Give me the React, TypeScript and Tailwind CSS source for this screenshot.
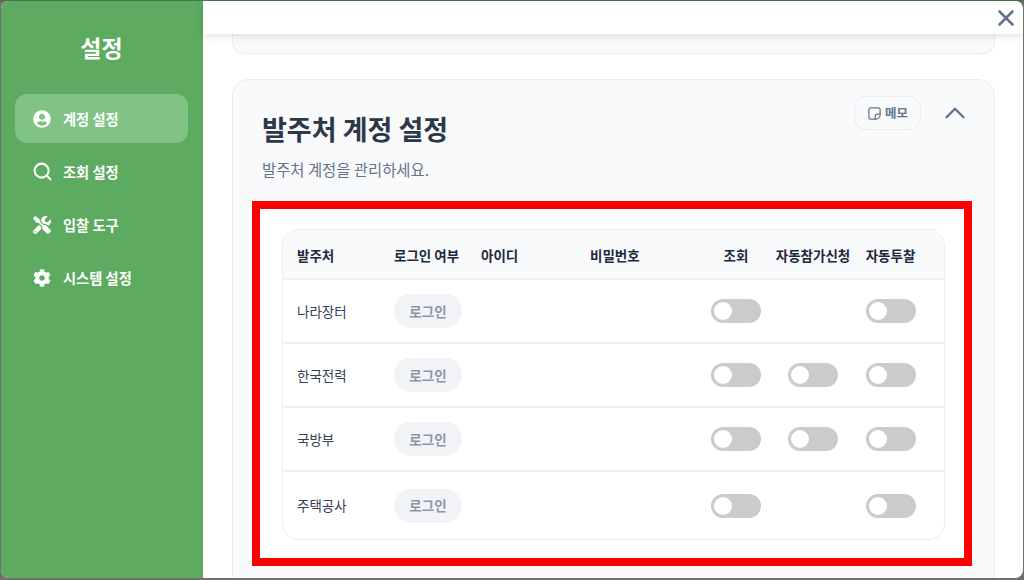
import { FaUserCircle, FaTools, FaCog } from "react-icons/fa";
import { Search, X, ChevronUp } from "lucide-react";

const nav = [
  { label: "계정 설정", icon: <FaUserCircle size={18} />, active: true },
  { label: "조회 설정", icon: <Search size={21} strokeWidth={2.3} className="shrink-0" /> },
  { label: "입찰 도구", icon: <FaTools size={18} /> },
  { label: "시스템 설정", icon: <FaCog size={18} /> },
];

const rows = [
  { name: "나라장터", a: true, b: false, c: true, h: "h-[64px]" },
  { name: "한국전력", a: true, b: true, c: true, h: "h-[64px]" },
  { name: "국방부", a: true, b: true, c: true, h: "h-[64px]" },
  { name: "주택공사", a: true, b: false, c: true, h: "h-[67px]" },
];

function Toggle() {
  return (
    <span className="flex h-6 w-[50px] items-center rounded-full bg-[#cbcbcb] pl-[3px]">
      <span className="h-[18px] w-[18px] rounded-full bg-white" />
    </span>
  );
}

function Note() {
  return (
    <svg width="15" height="15" viewBox="0 0 24 24" fill="none" stroke="currentColor" strokeWidth="2" strokeLinecap="round" strokeLinejoin="round">
      <path d="M6 3h12a3 3 0 0 1 3 3v8c0 4-3 7-7 7H6a3 3 0 0 1-3-3V6a3 3 0 0 1 3-3z" />
      <path d="M21 13h-4a4 4 0 0 0-4 4v4" />
    </svg>
  );
}

const cols = "grid grid-cols-[97px_87px_109px_122px_76px_78px_77px_14px] items-center";

export default function App() {
  return (
    <div className="flex h-[580px] w-[1024px] flex-col overflow-hidden border-t border-[#47704c] bg-[#6f716f] pr-px pb-[2px] pl-px [font-family:'Noto_Sans_CJK_KR','Noto_Sans',sans-serif]">
      <div className="flex h-[577px] overflow-hidden rounded-[8px] bg-white">
        <aside className="flex w-[202px] shrink-0 flex-col bg-[#5cab60] pr-[15px] pl-[14px] text-white">
          <h1 className="mt-[30px] mb-[31px] text-center text-[23px] leading-[32px] font-bold">설정</h1>
          <nav className="flex flex-col gap-1">
            {nav.map((n) => (
              <div
                key={n.label}
                className={`flex h-[49px] items-center gap-[12px] rounded-xl pl-[18px] text-[14.25px] font-bold ${n.active ? "bg-[#81c285]" : ""}`}
              >
                <span className="flex w-[18px] justify-center">{n.icon}</span>
                <span>{n.label}</span>
              </div>
            ))}
          </nav>
        </aside>
        <main className="relative flex min-w-0 flex-1 flex-col">
          <header className="relative z-10 flex h-[33px] shrink-0 items-center justify-end bg-white pr-[4px] shadow-[0_2px_8px_rgba(0,0,0,0.12)]">
            <X size={26} strokeWidth={2.4} className="text-[#64748b]" />
          </header>
          <div className="flex flex-col pr-[28px] pl-[29px]">
            <div className="h-[20px] rounded-b-xl border border-t-0 border-[#e8edf3] bg-[#f8fafc]" />
            <section className="mt-[25px] h-[540px] rounded-t-2xl border border-[#e8edf3] bg-[#f8fafc]">
              <div className="flex items-start justify-between pt-[16px] pr-[22px] pl-[29px]">
                <div>
                  <h2 className="mt-[14px] text-[27px] leading-[38px] font-bold text-[#2d3748]">발주처 계정 설정</h2>
                  <p className="mt-[10px] mb-[1px] text-[15.4px] leading-[22px] text-[#64748b]">발주처 계정을 관리하세요.</p>
                </div>
                <div className="flex items-center gap-[17px]">
                  <button className="flex h-[34px] w-[67px] items-center justify-center gap-[3px] rounded-xl border border-[#e8edf3] bg-[#f8fafc] text-[12.5px] font-semibold text-[#64748b]">
                    <Note />
                    메모
                  </button>
                  <ChevronUp size={34} strokeWidth={1.7} className="text-[#64748b]" />
                </div>
              </div>
              <div className="mt-[20px] ml-[19px] w-[720px] border-[8px] border-[#ff0000] bg-[#f8fafc]">
                <div className="h-[349px] rounded-xl bg-white pt-[20px] pr-[19px] pl-[22px]">
                  <div className="overflow-hidden rounded-2xl border border-[#e8edf3]">
                    <div className={`${cols} h-[50px] border-b-2 border-[#eef1f5] bg-[#f8fafc] pt-[2px] text-[13.5px] font-semibold text-[#1e293b]`}>
                      <span className="pl-[14px]">발주처</span>
                      <span className="pl-[14px]">로그인 여부</span>
                      <span className="pl-[14px]">아이디</span>
                      <span className="pl-[14px]">비밀번호</span>
                      <span className="text-center">조회</span>
                      <span className="text-center">자동참가신청</span>
                      <span className="text-center">자동투찰</span>
                    </div>
                    {rows.map((r, i) => (
                      <div
                        key={r.name}
                        className={`${cols} ${r.h} ${i < rows.length - 1 ? "border-b-2 border-[#eef1f5]" : ""} text-[13.5px] text-[#334155]`}
                      >
                        <span className="pl-[14px]">{r.name}</span>
                        <span className="pl-[14px]">
                          <button className="h-[34px] w-[68px] rounded-full bg-[#f1f3f6] text-[13.5px] font-semibold text-[#8a97ab]">로그인</button>
                        </span>
                        <span />
                        <span />
                        <span className="flex justify-center">{r.a && <Toggle />}</span>
                        <span className="flex justify-center">{r.b && <Toggle />}</span>
                        <span className="flex justify-center">{r.c && <Toggle />}</span>
                      </div>
                    ))}
                  </div>
                </div>
              </div>
            </section>
          </div>
        </main>
      </div>
    </div>
  );
}
